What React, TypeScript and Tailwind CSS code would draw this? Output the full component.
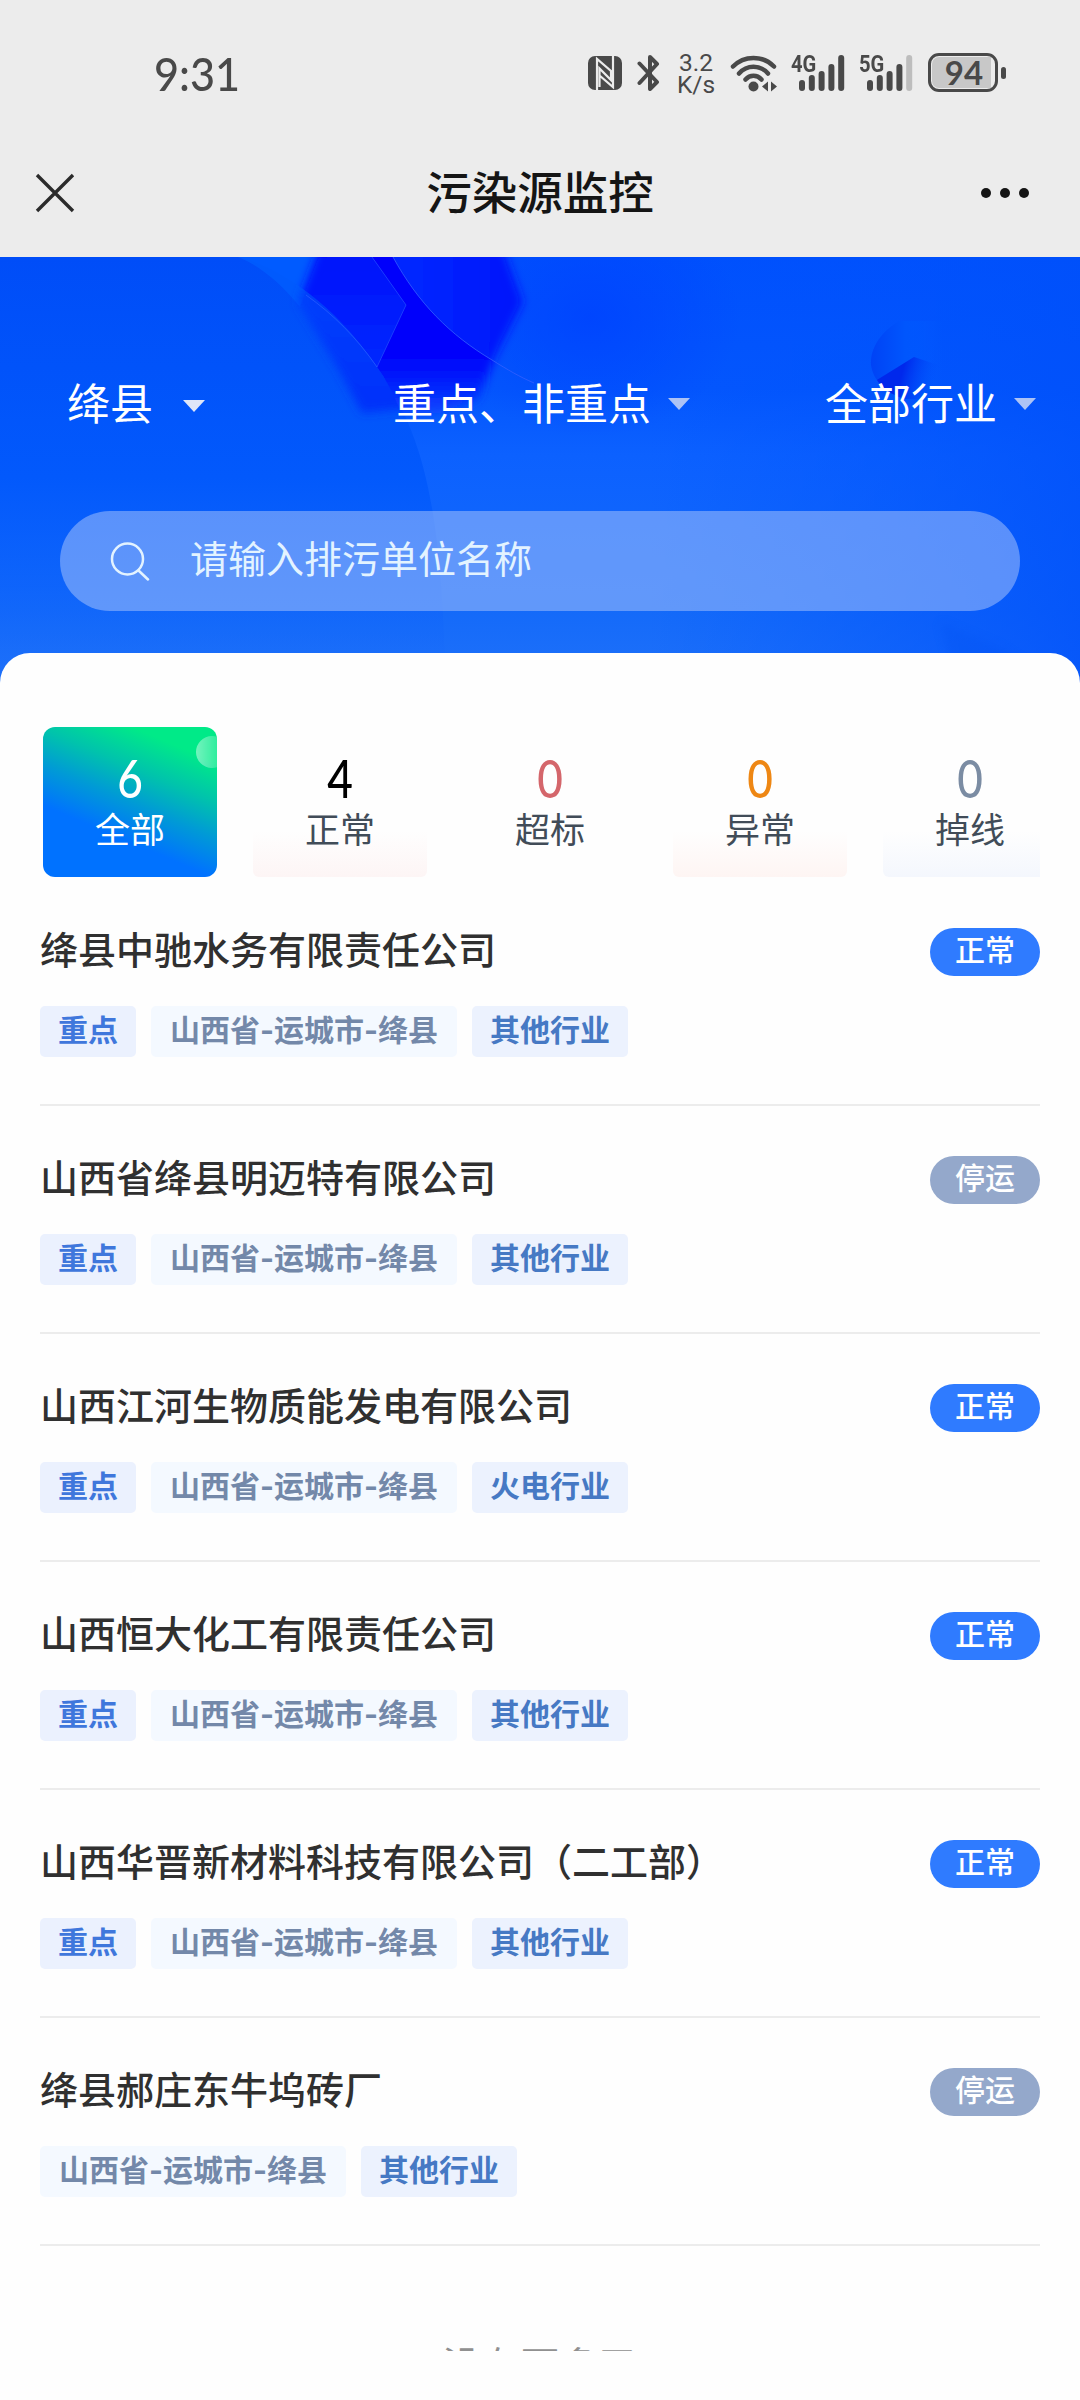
import React from "react";

type Company = { name: string; key: boolean; industry: string; running: boolean };

const companies: Company[] = [
  { name: "绛县中驰水务有限责任公司", key: true, industry: "其他行业", running: true },
  { name: "山西省绛县明迈特有限公司", key: true, industry: "其他行业", running: false },
  { name: "山西江河生物质能发电有限公司", key: true, industry: "火电行业", running: true },
  { name: "山西恒大化工有限责任公司", key: true, industry: "其他行业", running: true },
  { name: "山西华晋新材料科技有限公司（二工部）", key: true, industry: "其他行业", running: true },
  { name: "绛县郝庄东牛坞砖厂", key: false, industry: "其他行业", running: false },
];

const stats = [
  { value: 6, label: "全部", color: "text-white", labelColor: "text-white", bg: "" },
  { value: 4, label: "正常", color: "text-black", labelColor: "text-[#414c58]", bg: "bg-linear-to-b from-[#fefefe] to-[#fdf5f5]" },
  { value: 0, label: "超标", color: "text-[#d4666b]", labelColor: "text-[#414c58]", bg: "" },
  { value: 0, label: "异常", color: "text-[#ee8714]", labelColor: "text-[#414c58]", bg: "bg-linear-to-b from-[#fefefe] to-[#fef5f3]" },
  { value: 0, label: "掉线", color: "text-[#7b8ca3]", labelColor: "text-[#414c58]", bg: "bg-linear-to-b from-[#fefefe] to-[#f4f7fd]" },
];

function Signal({ label, weak, className }: { label: string; weak?: boolean; className: string }) {
  const tops = [25, 20, 16, 9, 0];
  return (
    <div className={`relative h-9 w-[54px] ${className}`}>
      <span className="absolute top-0 left-0 origin-left scale-x-[0.84] font-['Roboto'] text-[24px] leading-[18px] font-bold">{label}</span>
      <svg className="absolute inset-0" width="54" height="36" viewBox="0 0 54 36">
        {tops.map((t, i) => (
          <rect key={i} x={8 + i * 9.8} y={t} width="6" height={36 - t} rx="3" fill={weak && i === 4 ? "#bdbdbd" : "#494949"} />
        ))}
      </svg>
    </div>
  );
}

function StatusBar() {
  return (
    <div className="flex h-[128px] items-start pt-[55px] text-[#494949]">
      <div className="-mt-[1px] ml-[154px] h-[38px] w-[90px] origin-left scale-x-[0.92] font-['Lato'] text-[47px] leading-[38px] font-medium whitespace-nowrap">9:31</div>
      <svg className="mt-[1px] ml-[344px]" width="34" height="34" viewBox="0 0 34 34">
        <rect width="34" height="34" rx="7" fill="#494949" />
        <path d="M9 34V3l14 12V24L11.500 12.500V31M25 0v31L11.500 19.500" fill="none" stroke="#ececec" strokeWidth="2.200" />
      </svg>
      <svg className="ml-[15px]" width="23" height="36" viewBox="0 0 23 36" fill="none" stroke="#494949" strokeWidth="4" strokeLinecap="round" strokeLinejoin="round">
        <path d="M2.500 8.500 20 27l-7 7V2l7 7L2.500 28" />
      </svg>
      <div className="-mt-[3px] ml-[17px] w-[38px] font-['Roboto'] text-[24.500px] leading-[22px]">
        <div className="text-center">3.2</div>
        <div className="text-center">K/s</div>
      </div>
      <svg className="ml-[15px]" width="48" height="37" viewBox="0 0 48 37">
        <g fill="none" stroke="#494949" strokeWidth="4.500" strokeLinecap="round">
          <path d="M3 11.500C14 0 33 0 44 11.500" />
          <path d="M9 18.500C17 9.500 30 9.500 38 18.500" />
          <path d="M15.500 24.500C20 19.500 27 19.500 31.500 24.500" />
        </g>
        <circle cx="23.500" cy="31.500" r="5" fill="#494949" />
        <path d="M32 31.500 38 26.500v10zM47 31.500 41 26.500v10z" fill="#494949" />
      </svg>
      <Signal label="4G" className="ml-[13px]" />
      <Signal label="5G" weak className="ml-[14px]" />
      <div className="-mt-[2px] ml-[15px] flex items-center">
        <div className="flex h-[39px] w-[70px] items-center rounded-[11px] border-[3px] border-[#494949] p-[1px]">
          <div className="flex h-full w-[59px] items-center justify-center rounded-l-[7px] bg-[#c8c8c8] pl-[5px] font-['Lato'] text-[33px] leading-none font-bold">94</div>
        </div>
        <div className="ml-[3px] h-[12px] w-[5px] rounded-full bg-[#494949]" />
      </div>
    </div>
  );
}

function Caret({ className }: { className: string }) {
  return (
    <svg width="22" height="12" viewBox="0 0 22 12" className={className}>
      <path d="M0 0h22L11 12z" fill="currentColor" />
    </svg>
  );
}

function HeroArt() {
  return (
    <svg className="absolute inset-0" width="1080" height="440" viewBox="0 0 1080 440">
      <defs>
        <linearGradient id="base" x1="0" y1="0" x2="0" y2="1">
          <stop offset="0" stopColor="#0050fd" />
          <stop offset="0.3" stopColor="#0356fd" />
          <stop offset="0.45" stopColor="#0c61ff" />
          <stop offset="0.8" stopColor="#146af9" />
          <stop offset="1" stopColor="#2172fa" />
        </linearGradient>
        <linearGradient id="edge" x1="0" y1="0" x2="1" y2="0">
          <stop offset="0.6" stopColor="#0055ff" stopOpacity="0" />
          <stop offset="1" stopColor="#0050fa" stopOpacity="0.75" />
        </linearGradient>
        <linearGradient id="disc" x1="0" y1="0" x2="0" y2="1">
          <stop offset="0" stopColor="#004df8" />
          <stop offset="0.5" stopColor="#0259fc" />
          <stop offset="0.75" stopColor="#0c62fb" stopOpacity="0.7" />
          <stop offset="1" stopColor="#1e6ff8" stopOpacity="0" />
        </linearGradient>
        <linearGradient id="hexR" x1="0" y1="0" x2="1" y2="0">
          <stop offset="0.4" stopColor="#0026ff" />
          <stop offset="1" stopColor="#0014fb" />
        </linearGradient>
        <linearGradient id="hexL" x1="0" y1="0" x2="0" y2="1">
          <stop offset="0" stopColor="#000ffb" />
          <stop offset="1" stopColor="#002cff" />
        </linearGradient>
        <linearGradient id="hexUnder" x1="0" y1="0" x2="0" y2="1">
          <stop offset="0" stopColor="#0044fc" />
          <stop offset="0.6" stopColor="#0038fb" />
          <stop offset="1" stopColor="#0030fa" />
        </linearGradient>
        <linearGradient id="core" gradientUnits="userSpaceOnUse" x1="0" y1="80" x2="0" y2="160">
          <stop offset="0" stopColor="#0000fb" />
          <stop offset="0.35" stopColor="#0008fb" />
          <stop offset="1" stopColor="#0a4cff" />
        </linearGradient>
        <linearGradient id="ball" x1="0" y1="0" x2="1" y2="0">
          <stop offset="0" stopColor="#0041f5" />
          <stop offset="0.5" stopColor="#0056fd" />
          <stop offset="1" stopColor="#005aff" stopOpacity="0" />
        </linearGradient>
        <linearGradient id="wedge" gradientUnits="userSpaceOnUse" x1="880" y1="110" x2="935" y2="125">
          <stop offset="0.4" stopColor="#0028ec" />
          <stop offset="1" stopColor="#0050fa" stopOpacity="0" />
        </linearGradient>
        <radialGradient id="shade">
          <stop offset="0" stopColor="#0040ff" />
          <stop offset="1" stopColor="#0040ff" stopOpacity="0" />
        </radialGradient>
        <filter id="soft" x="-20%" y="-20%" width="140%" height="140%">
          <feGaussianBlur stdDeviation="5" />
        </filter>
        <clipPath id="inDisc">
          <path d="M0 0H238C285 12 338 52 377 110C425 180 442 250 446 440H0z" />
        </clipPath>
        <clipPath id="aboveDisc">
          <path d="M238 0C285 12 338 52 377 110L406 48L372 0z" />
        </clipPath>
        <clipPath id="offDisc">
          <path d="M372 0H393C418 46 450 78 492 103L530 127V200H418C405 165 395 135 377 110L406 48z" />
        </clipPath>
        <clipPath id="rightArc">
          <path d="M393 0C418 46 450 78 492 103C520 120 540 130 570 138V0z" />
        </clipPath>
        <clipPath id="ballClip">
          <path d="M899 64C876 78 870 96 871 108C873 122 884 136 905 142L960 142V64z" />
        </clipPath>
      </defs>
      <rect width="1080" height="440" fill="url(#base)" />
      <rect width="1080" height="440" fill="url(#edge)" />
      <ellipse cx="590" cy="60" rx="150" ry="120" fill="url(#shade)" opacity="0.7" />
      <path d="M0 0H238C285 12 338 52 377 110C425 180 442 250 446 440H0z" fill="url(#disc)" />
      <path d="M238 0H318L300 50C280 25 258 8 238 0z" fill="#0060ff" opacity="0.7" />
      <g clipPath="url(#inDisc)">
        <path d="M318 -6H420V150L362 156L337 110L298 46z" fill="url(#hexUnder)" filter="url(#soft)" />
      </g>
      <g clipPath="url(#rightArc)">
        <path d="M340 -12H502L523 45L492 106L470 140H380z" fill="url(#hexR)" filter="url(#soft)" />
      </g>
      <g clipPath="url(#aboveDisc)">
        <path d="M320 -12H440V130H337L298 46z" fill="url(#hexL)" filter="url(#soft)" />
      </g>
      <g clipPath="url(#offDisc)">
        <path d="M340 -20H480L496 98L478 142L440 156H340z" fill="url(#core)" filter="url(#soft)" />
      </g>
      <path d="M393 0C418 46 450 78 492 103C508 113 520 120 534 126" fill="none" stroke="#3a62ff" strokeWidth="1" opacity="0.7" />
      <path d="M372 0L406 48L377 110" fill="none" stroke="#2448ff" strokeWidth="1" opacity="0.7" />
      <path d="M306 38C334 58 356 80 377 110" fill="none" stroke="#2b60ff" strokeWidth="1" opacity="0.7" />
      <g clipPath="url(#ballClip)">
        <rect x="868" y="60" width="75" height="82" fill="url(#ball)" />
        <path d="M872 126L914 100L950 112V142H872z" fill="url(#wedge)" />
      </g>
      <path d="M940 365L1000 390L1080 440H960z" fill="#0050f0" opacity="0.25" filter="url(#soft)" />
    </svg>
  );
}

function Hero() {
  return (
    <div className="relative h-[440px] shrink-0 overflow-hidden bg-[#0559fc] text-white">
      <HeroArt />
      <div className="relative flex h-[254px] items-start pt-[114px] text-[43px] leading-[60px]">
        <div className="flex w-[326px] items-center pl-[67px]">
          绛县<Caret className="mt-[9px] ml-[30px] text-[#dfe6f8]" />
        </div>
        <div className="flex w-[431px] items-center pl-[67px]">
          重点、非重点<Caret className="mt-[5px] ml-[17px] text-[#adc3f5]" />
        </div>
        <div className="flex items-center pl-[68px]">
          全部行业<Caret className="mt-[5px] ml-[17px] text-[#adc3f5]" />
        </div>
      </div>
      <div className="relative mx-[60px] flex h-[100px] items-center rounded-full bg-[#a9c4fb]/52 text-[38px] text-[#e3f3ff]">
        <svg className="ml-[50px]" width="40" height="40" viewBox="0 0 40 40" fill="none" stroke="currentColor" strokeWidth="2.500" strokeLinecap="round">
          <circle cx="17.500" cy="18" r="15.500" />
          <path d="M28.500 29.500 38 38.500" />
        </svg>
        <span className="-mt-[9px] ml-[40px]">请输入排污单位名称</span>
      </div>
    </div>
  );
}

function Stats() {
  return (
    <div className="flex gap-9 overflow-hidden">
      {stats.map((s, i) => (
        <div
          key={s.label}
          className={`relative flex h-[150px] w-[174px] shrink-0 flex-col items-center overflow-hidden ${
            i === 0 ? "rounded-[12px] bg-[linear-gradient(203deg,#00ea88_16%,#00c3ac_34%,#009ad6_50%,#0072ff_68%)]" : "rounded-b-[6px]"
          }`}
        >
          {i === 0 && <div className="absolute top-[9px] -right-[11px] size-[32px] rounded-full bg-linear-to-r from-white/45 to-white/5" />}
          {s.bg && <div className={`absolute inset-x-0 bottom-0 h-[46px] ${s.bg}`} />}
          <span className={`relative mt-[25px] scale-x-[0.85] font-['Lato'] text-[52px] leading-[52px] font-medium ${s.color}`}>{s.value}</span>
          <span className={`relative text-[35px] leading-[48px] ${s.labelColor}`}>{s.label}</span>
        </div>
      ))}
    </div>
  );
}

function Dash() {
  return <span className="font-['Inter']">-</span>;
}

function Row({ c }: { c: Company }) {
  return (
    <div className="mr-10 h-[228px] border-b-2 border-[#ececec] pt-[50px]">
      <div className="flex h-[48px] items-center justify-between">
        <span className="-mt-[8px] text-[38px] leading-[48px] font-medium whitespace-nowrap text-[#303030]">{c.name}</span>
        <span className={`flex h-[48px] w-[110px] justify-center rounded-full text-[30px] leading-[40px] font-medium text-white ${c.running ? "bg-[#2f7bff]" : "bg-[#94a8cb]"}`}>
          {c.running ? "正常" : "停运"}
        </span>
      </div>
      <div className="mt-[30px] flex gap-[15px] text-[30px] leading-[45px] font-bold">
        {c.key && <span className="h-[51px] rounded-[5px] bg-[#ebf1fe] px-[18px] text-[#3f77dc]">重点</span>}
        <span className="h-[51px] w-[306px] rounded-[5px] bg-[#f4f9ff] text-center whitespace-nowrap text-[#7388a9]">
          山西省<Dash />运城市<Dash />绛县
        </span>
        <span className="h-[51px] rounded-[5px] bg-[#ecf2fe] px-[18px] text-[#4679c4]">{c.industry}</span>
      </div>
    </div>
  );
}

export default function App() {
  return (
    <div className="flex h-[2400px] w-[1080px] flex-col overflow-hidden bg-[#fefefe] font-['Noto_Sans_CJK_SC',sans-serif]">
      <header className="h-[257px] shrink-0 bg-[#ececec]">
        <StatusBar />
        <div className="flex h-[129px] items-center justify-between px-[35px]">
          <div className="w-[90px]">
            <svg width="40" height="40" viewBox="0 0 40 40" stroke="#2b2b2b" strokeWidth="3.400">
              <path d="M2 2 38 38M38 2 2 38" />
            </svg>
          </div>
          <h1 className="-mt-[5px] text-[45.500px] leading-[60px] font-medium text-[#151515]">污染源监控</h1>
          <div className="flex w-[90px] justify-end gap-[9px] pr-[16px]">
            <i className="size-[10px] rounded-full bg-[#151515]" />
            <i className="size-[10px] rounded-full bg-[#151515]" />
            <i className="size-[10px] rounded-full bg-[#151515]" />
          </div>
        </div>
      </header>
      <Hero />
      <main className="relative -mt-[44px] h-[1698px] shrink-0 overflow-hidden rounded-t-[30px] bg-[#fefefe]">
        <div className="mr-10 pt-[74px] pl-[43px]">
          <Stats />
        </div>
        <div className="mt-[1px] pl-10">
          {companies.map((c) => (
            <Row key={c.name} c={c} />
          ))}
        </div>
        <p className="mt-[89px] text-center text-[39px] leading-[56px] text-[#909090]">没有更多了</p>
      </main>
    </div>
  );
}
